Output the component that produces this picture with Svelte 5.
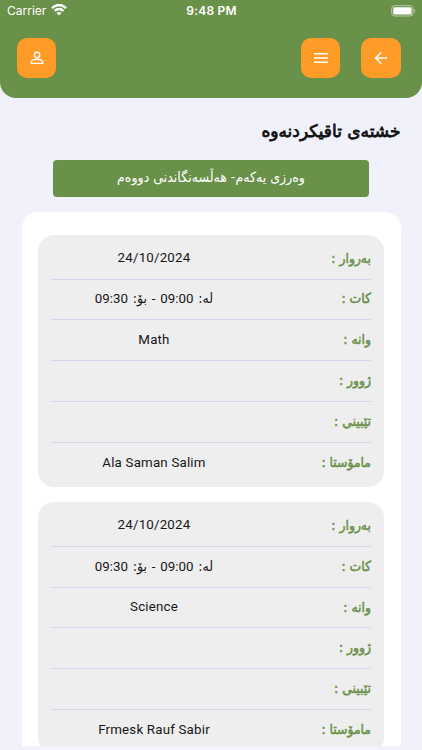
<script>
  const labels = ['بەروار :', 'کات :', 'وانە :', 'ژوور :', 'تێبینی :', 'مامۆستا :'];
  const exams = [
    { date: '24/10/2024', from: '09:00', to: '09:30', subject: 'Math', teacher: 'Ala Saman Salim' },
    { date: '24/10/2024', from: '09:00', to: '09:30', subject: 'Science', teacher: 'Frmesk Rauf Sabir' }
  ];
  const valueOf = (exam, i) => [exam.date, '', exam.subject, '', '', exam.teacher][i];
</script>

<div class="screen">
  <header>
    <div class="status">
      <div class="carrier">
        <span>Carrier</span>
        <svg width="16" height="12" viewBox="0 0 16 12" fill="none" stroke="#fff" stroke-width="2.4">
          <path d="M1 4.3C5-.1 11-.1 15 4.3" />
          <path d="M3.6 7C6.2 4.3 9.8 4.3 12.4 7" />
          <path d="M5.5 9C7 7.6 9 7.6 10.5 9L8 11.6Z" fill="#fff" stroke="none" />
        </svg>
      </div>
      <span class="time">9:48 PM</span>
      <svg class="battery" width="25" height="12" viewBox="0 0 25 12">
        <rect x=".7" y=".7" width="21.4" height="10.3" rx="3" fill="none" stroke="#fff" stroke-opacity=".55" />
        <rect x="2.2" y="2.2" width="18.4" height="7.3" rx="1.5" fill="#fff" />
        <path d="M23.3 4v3.8c1.3-.6 1.3-3.2 0-3.8Z" fill="#fff" fill-opacity=".6" />
      </svg>
    </div>
    <nav>
      <button aria-label="Profile">
        <svg width="20" height="20" viewBox="0 0 20 20" fill="none" stroke="#fff" stroke-width="1.4">
          <circle cx="10" cy="7" r="2.7" />
          <path d="M4.3 15.4v-1.3c0-1.9 3.5-2.8 5.7-2.8s5.7.9 5.7 2.8v1.3Z" stroke-linejoin="round" />
        </svg>
      </button>
      <button class="menu" aria-label="Menu">
        <svg width="20" height="20" viewBox="0 0 20 20" stroke="#fff" stroke-width="1.4">
          <path d="M3 5.8h14M3 10h14M3 14.2h14" />
        </svg>
      </button>
      <button aria-label="Back">
        <svg width="20" height="20" viewBox="0 0 20 20" fill="none" stroke="#fff" stroke-width="1.5">
          <path d="M16.2 10H4.8M10.3 4.3L4.6 10l5.7 5.7" />
        </svg>
      </button>
    </nav>
  </header>

  <main dir="rtl">
    <h1>خشتەی تاقیکردنەوە</h1>
    <div class="season">وەرزی یەکەم- هەڵسەنگاندنی دووەم</div>
    <section class="panel">
      {#each exams as exam}
        <article>
          {#each labels as label, i}
            <div class="row">
              <span class="label">{label}</span>
              {#if i === 1}
                <span class="value period"><span class="ku">لە:</span> {exam.from} - <span class="ku">بۆ:</span> {exam.to}</span>
              {:else}
                <span class="value">{valueOf(exam, i)}</span>
              {/if}
            </div>
          {/each}
        </article>
      {/each}
    </section>
  </main>
</div>

<style>
  .screen {
    box-sizing: border-box;
    width: 422px;
    height: 750px;
    padding-bottom: 4px;
    display: flex;
    flex-direction: column;
    overflow: hidden;
    background: #f1f1fc;
    font-family: Roboto, "DejaVu Sans", sans-serif;
  }
  header {
    flex: none;
    height: 97.5px;
    background: #6a914a;
    border-radius: 0 0 16px 16px;
  }
  .status {
    height: 22px;
    padding: 0 6px 0 7px;
    box-sizing: border-box;
    display: grid;
    grid-template-columns: 1fr auto 1fr;
    align-items: center;
    color: #fff;
    font: 12px/22px Inter, sans-serif;
  }
  .carrier {
    display: flex;
    align-items: center;
    gap: 5px;
    height: 22px;
  }
  .carrier svg { margin-top: -2px; }
  .time { font-weight: 600; letter-spacing: 0.2px; }
  .battery { justify-self: end; margin-top: -1px; }
  nav {
    display: flex;
    padding: 16px 21.5px 0 17px;
    gap: 21px;
  }
  button {
    width: 39.3px;
    height: 39.5px;
    padding: 0;
    border: 0;
    border-radius: 10px;
    background: #ff9b27;
    display: flex;
    align-items: center;
    justify-content: center;
  }
  .menu { margin-left: auto; }
  main {
    flex: 1;
    min-height: 0;
    overflow: hidden;
    padding: 0 21.5px;
  }
  h1 {
    margin: 19px 0 0;
    height: 29px;
    font: 17px/28px "DejaVu Sans", sans-serif;
    -webkit-text-stroke: 0.8px #111;
    color: #111;
  }
  .season {
    margin: 14px 31.5px 0;
    height: 37.5px;
    border-radius: 4px;
    background: #6a914a;
    color: #fff;
    text-align: center;
    font: 14px/35px "DejaVu Sans Condensed", "DejaVu Sans", sans-serif;
    font-stretch: condensed;
  }
  .panel {
    margin-top: 14.5px;
    padding: 23px 16.5px;
    border-radius: 16px;
    background: #fff;
    display: flex;
    flex-direction: column;
    gap: 15px;
  }
  article {
    box-sizing: border-box;
    height: 252.3px;
    padding: 4.3px 13px 0;
    border-radius: 16px;
    background: #eee;
  }
  .row {
    box-sizing: border-box;
    height: 40.8px;
    display: flex;
    align-items: center;
    border-bottom: 1.5px solid #d4d4ea;
  }
  .row:last-child { border-bottom: 0; }
  .label {
    width: 114px;
    margin-top: -2px;
    color: #6a914a;
    font: 13.8px/20px "DejaVu Sans Condensed", "DejaVu Sans", sans-serif;
    font-stretch: condensed;
    -webkit-text-stroke: 0.5px #6a914a;
    white-space: nowrap;
  }
  .value {
    flex: 1;
    margin-top: -1px;
    text-align: center;
    color: #161616;
    font-size: 13.3px;
    line-height: 20px;
    letter-spacing: 0.2px;
    white-space: nowrap;
  }
  .period { word-spacing: 1.5px; }
  .ku {
    font-family: "DejaVu Sans Condensed", "DejaVu Sans", sans-serif;
    font-stretch: condensed;
    font-size: 14px;
    letter-spacing: 0;
  }
</style>
